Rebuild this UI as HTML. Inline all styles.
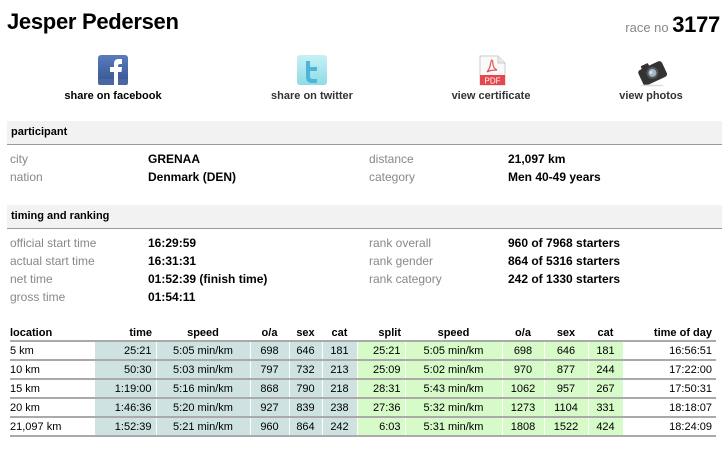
<!DOCTYPE html>
<html><head><meta charset="utf-8"><style>
*{margin:0;padding:0;box-sizing:border-box}
body{width:727px;height:450px;background:#fff;font-family:"Liberation Sans",Arial,sans-serif;color:#000;position:relative;overflow:hidden}
.a{position:absolute;white-space:nowrap}
h1{position:absolute;left:7px;top:9px;font-size:22px;font-weight:bold;letter-spacing:-0.3px}
.rn{right:7px;top:12px;font-size:13px;color:#888}
.rn b{font-size:22px;color:#000;letter-spacing:-0.3px}
.lbl{font-size:11px;font-weight:bold;text-align:center;width:160px}
.sec{position:absolute;left:7px;width:715px;height:24px;background:#f2f2f2;border-bottom:1px solid #999;font-size:11px;font-weight:bold;padding:5px 0 0 4px}
.k{font-size:12px;color:#888}
.v{font-size:12px;font-weight:bold}
table{position:absolute;left:10px;top:326px;border-collapse:collapse;font-size:11px}
th{font-weight:bold;height:15px;text-align:center;padding:0 4px;border-bottom:2px solid #aaa}
td{height:19px;text-align:center;padding:0 4px;border-bottom:2px solid #aaa;border-left:1px solid #fff}
td.b{background:#cfe2e2}td.g{background:#d6fac8}
.l{text-align:left}.r{text-align:right}
td:first-child{border-left:none}
</style></head><body>
<h1>Jesper Pedersen</h1>
<div class="a rn">race no <b>3177</b></div>

<svg class="a" style="left:98px;top:55px" width="30" height="31" viewBox="0 0 30 31"><defs><linearGradient id="fb" x1="0" y1="0" x2="0" y2="1"><stop offset="0" stop-color="#5a7bbd"/><stop offset="1" stop-color="#34548f"/></linearGradient></defs><rect width="30" height="30" rx="3" fill="url(#fb)"/><rect y="24" width="30" height="6" rx="2" fill="#4a66a3"/><path d="M16 30V17h-4v-5h4V9c0-4 2-5 5-5h3v5h-2c-1 0-2 .5-2 1.5V12h4l-.5 5H20v13z" fill="#fff"/></svg>
<svg class="a" style="left:297px;top:55px" width="30" height="31" viewBox="0 0 30 31"><defs><linearGradient id="tw" x1="0" y1="0" x2="0" y2="1"><stop offset="0" stop-color="#c5f1f5"/><stop offset="1" stop-color="#8fdbe6"/></linearGradient></defs><rect width="30" height="30" rx="3" fill="url(#tw)"/><path d="M9 6h4v6h7v4h-7v5c0 2 1 3 3 3h4v4h-5c-4 0-6-2-6-6z" fill="#4fb5d8"/></svg>
<svg class="a" style="left:479px;top:55px" width="27" height="31" viewBox="0 0 27 31"><path d="M1 1h18l7 7v22H1z" fill="#fafafa" stroke="#ccc"/><path d="M19 1v7h7" fill="#e8e8e8" stroke="#ccc"/><path d="M13 5c-2 0 0 6-5 12M13 5c2 2-1 7 5 10M8 17c3-2 7-2 10-2" fill="none" stroke="#e05555" stroke-width="1.2"/><rect x="1" y="20" width="25" height="10" fill="#e5474c"/><text x="13.5" y="28.5" font-size="8" fill="#fff" text-anchor="middle" font-family="Liberation Sans">PDF</text></svg>
<svg class="a" style="left:636px;top:57px" width="32" height="30" viewBox="0 0 32 30"><g transform="rotate(-25 16 15)"><rect x="3" y="8" width="26" height="17" rx="3" fill="#333"/><rect x="8" y="5" width="8" height="4" rx="1" fill="#333"/><circle cx="16" cy="16" r="6" fill="#555"/><circle cx="16" cy="16" r="4" fill="#9ab8c8"/><circle cx="15" cy="15" r="1.5" fill="#dde"/></g><ellipse cx="16" cy="28.5" rx="12" ry="1" fill="#ddd"/></svg>

<div class="a lbl" style="left:33px;top:90px">share on facebook</div>
<div class="a lbl" style="left:232px;top:90px;color:#333">share on twitter</div>
<div class="a lbl" style="left:411px;top:90px;color:#333">view certificate</div>
<div class="a lbl" style="left:571px;top:90px;color:#333">view photos</div>

<div class="sec" style="top:121px">participant</div>
<div class="a k" style="left:10px;top:152px">city</div><div class="a v" style="left:148px;top:152px">GRENAA</div>
<div class="a k" style="left:10px;top:170px">nation</div><div class="a v" style="left:148px;top:170px">Denmark (DEN)</div>
<div class="a k" style="left:369px;top:152px">distance</div><div class="a v" style="left:508px;top:152px">21,097 km</div>
<div class="a k" style="left:369px;top:170px">category</div><div class="a v" style="left:508px;top:170px">Men 40-49 years</div>

<div class="sec" style="top:205px">timing and ranking</div>
<div class="a k" style="left:10px;top:236px">official start time</div><div class="a v" style="left:148px;top:236px">16:29:59</div>
<div class="a k" style="left:10px;top:254px">actual start time</div><div class="a v" style="left:148px;top:254px">16:31:31</div>
<div class="a k" style="left:10px;top:272px">net time</div><div class="a v" style="left:148px;top:272px">01:52:39 (finish time)</div>
<div class="a k" style="left:10px;top:290px">gross time</div><div class="a v" style="left:148px;top:290px">01:54:11</div>
<div class="a k" style="left:369px;top:236px">rank overall</div><div class="a v" style="left:508px;top:236px">960 of 7968 starters</div>
<div class="a k" style="left:369px;top:254px">rank gender</div><div class="a v" style="left:508px;top:254px">864 of 5316 starters</div>
<div class="a k" style="left:369px;top:272px">rank category</div><div class="a v" style="left:508px;top:272px">242 of 1330 starters</div>

<table>
<colgroup><col style="width:84px"><col style="width:62px"><col style="width:94px"><col style="width:39px"><col style="width:33px"><col style="width:35px"><col style="width:48px"><col style="width:97px"><col style="width:42px"><col style="width:44px"><col style="width:35px"><col style="width:93px"></colgroup>
<tr><th class="l" style="padding-left:0">location</th><th class="r">time</th><th>speed</th><th>o/a</th><th>sex</th><th>cat</th><th class="r">split</th><th>speed</th><th>o/a</th><th>sex</th><th>cat</th><th class="r">time of day</th></tr>
<tr><td class="l" style="padding-left:0">5 km</td><td class="b r">25:21</td><td class="b">5:05 min/km</td><td class="b">698</td><td class="b">646</td><td class="b">181</td><td class="g r">25:21</td><td class="g">5:05 min/km</td><td class="g">698</td><td class="g">646</td><td class="g">181</td><td class="r">16:56:51</td></tr>
<tr><td class="l" style="padding-left:0">10 km</td><td class="b r">50:30</td><td class="b">5:03 min/km</td><td class="b">797</td><td class="b">732</td><td class="b">213</td><td class="g r">25:09</td><td class="g">5:02 min/km</td><td class="g">970</td><td class="g">877</td><td class="g">244</td><td class="r">17:22:00</td></tr>
<tr><td class="l" style="padding-left:0">15 km</td><td class="b r">1:19:00</td><td class="b">5:16 min/km</td><td class="b">868</td><td class="b">790</td><td class="b">218</td><td class="g r">28:31</td><td class="g">5:43 min/km</td><td class="g">1062</td><td class="g">957</td><td class="g">267</td><td class="r">17:50:31</td></tr>
<tr><td class="l" style="padding-left:0">20 km</td><td class="b r">1:46:36</td><td class="b">5:20 min/km</td><td class="b">927</td><td class="b">839</td><td class="b">238</td><td class="g r">27:36</td><td class="g">5:32 min/km</td><td class="g">1273</td><td class="g">1104</td><td class="g">331</td><td class="r">18:18:07</td></tr>
<tr><td class="l" style="padding-left:0">21,097 km</td><td class="b r">1:52:39</td><td class="b">5:21 min/km</td><td class="b">960</td><td class="b">864</td><td class="b">242</td><td class="g r">6:03</td><td class="g">5:31 min/km</td><td class="g">1808</td><td class="g">1522</td><td class="g">424</td><td class="r">18:24:09</td></tr>
</table>
</body></html>
